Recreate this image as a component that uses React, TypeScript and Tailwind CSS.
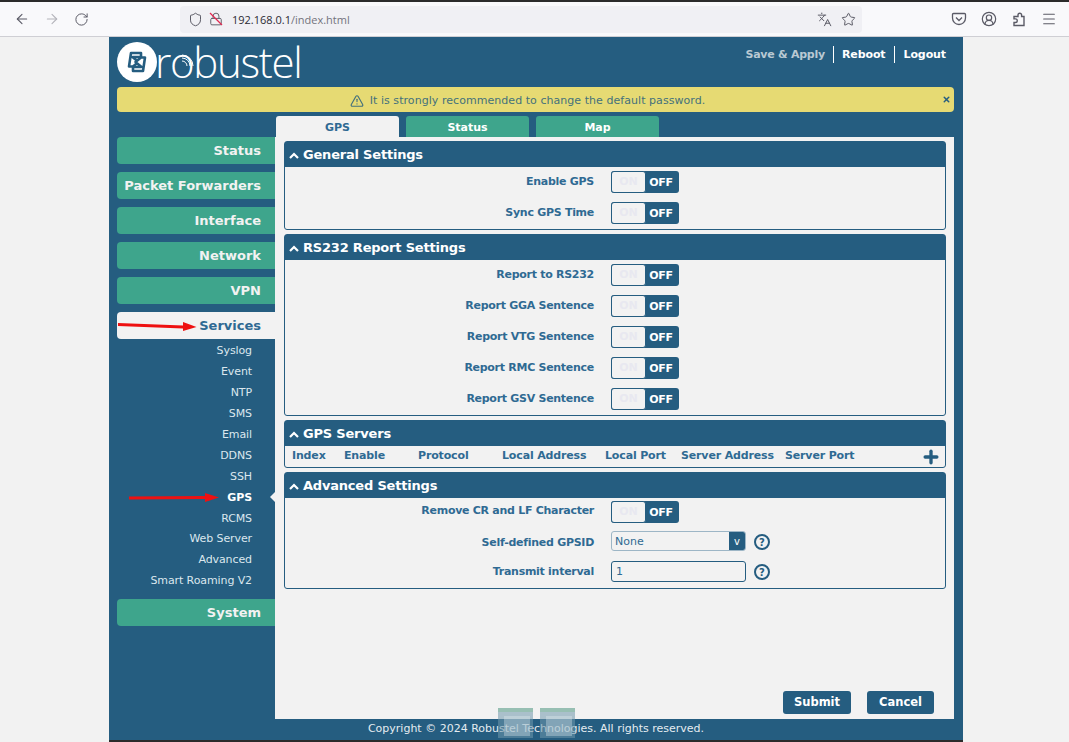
import React from "react";
import { ArrowLeft, ArrowRight, RotateCw, Shield, Lock, Languages, Star, Menu, CircleUserRound, TriangleAlert, Plus, X } from "lucide-react";

const font = "font-['DejaVu_Sans',sans-serif]";

function Toggle() {
  return (
    <div className="flex h-[22px] w-[68px] rounded-[3px] bg-[#255d80]">
      <div className="flex w-[35px] items-center justify-center rounded-[3px] border border-[#255d80] bg-[#f2f2f2] pt-[1px] text-[11px] font-bold text-[#e8e8f0]">ON</div>
      <div className="flex flex-1 items-center justify-center pr-[3px] pt-[2px] text-[11px] font-bold tracking-[-0.3px] text-white">OFF</div>
    </div>
  );
}

function Row({ label, children, compact }: { label: string; children: React.ReactNode; compact?: boolean }) {
  return (
    <div className={`flex items-start ${compact ? "h-[30px]" : "h-[31px]"}`}>
      <div className={`w-[309px] text-right text-[11px] font-bold leading-[16px] tracking-[-0.28px] text-[#2f6a93] ${compact ? "pt-[2px]" : "pt-[3px]"}`}>{label}</div>
      <div className="ml-[17px]">{children}</div>
    </div>
  );
}

function Section({ title, children, bodyClass }: { title: string; children: React.ReactNode; bodyClass: string }) {
  return (
    <section className="rounded-[3px] border border-[#255d80]">
      <div className="flex h-[25px] items-center gap-[4px] bg-[#255d80] pl-[4px] pt-[1px] text-[13px] font-bold tracking-[-0.2px] text-white">
        <svg width="10" height="7" viewBox="0 0 10 7" fill="none" stroke="currentColor" strokeWidth="2.200"><path d="M1 6 5 2l4 4" /></svg>
        <span>{title}</span>
      </div>
      <div className={bodyClass}>{children}</div>
    </section>
  );
}

function Help() {
  return <span className="flex h-[16px] w-[16px] items-center justify-center rounded-full border-2 border-[#255d80] text-[10px] font-bold text-[#255d80]">?</span>;
}

const NavItem = ({ label }: { label: string }) => (
  <div className="flex h-[27px] items-center justify-end rounded-l-[4px] bg-[#3ea58c] pr-[14px] pt-[1px] text-[13px] font-bold text-[#f2f2f2]">{label}</div>
);

const subs = ["Syslog", "Event", "NTP", "SMS", "Email", "DDNS", "SSH", "GPS", "RCMS", "Web Server", "Advanced", "Smart Roaming V2"];

function Sidebar() {
  return (
    <aside className="w-[166px] shrink-0 pl-[8px]">
      <div className="flex flex-col gap-[8px]">
        {["Status", "Packet Forwarders", "Interface", "Network", "VPN"].map((n) => <NavItem key={n} label={n} />)}
        <div className="relative flex h-[27px] items-center justify-end rounded-l-[4px] bg-[#f2f2f2] pr-[14px] pt-[1px] text-[13px] font-bold text-[#2f6a93]">
          Services
          <svg className="absolute left-[1px] top-[8px]" width="80" height="13" viewBox="0 0 80 13">
            <path d="M0 3 L65 5.500 L65 2 L78.500 7 L65 11 L65 8.500 L0 6 Z" fill="#ee1111" />
          </svg>
        </div>
      </div>
      <ul className="mb-[7.400px] mt-[1px] flex flex-col pr-[23px] text-right text-[11px] tracking-[-0.1px] text-[#dbe7ee]">
        {subs.map((s) => (
          <li key={s} className={`relative h-[20.950px] leading-[21px] ${s === "GPS" ? "font-bold text-white" : ""}`}>
            {s}
            {s === "GPS" && (
              <>
                <svg className="absolute left-[12px] top-[5px]" width="90" height="12" viewBox="0 0 90 12">
                  <path d="M0 4.500 L76 4 L76 1 L90 5.500 L76 10 L76 7 L0 7.500 Z" fill="#ee1111" />
                </svg>
                <span className="absolute right-[-23px] top-[5px] h-0 w-0 border-y-[5px] border-r-[5px] border-y-transparent border-r-[#f2f2f2]" />
              </>
            )}
          </li>
        ))}
      </ul>
      <NavItem label="System" />
    </aside>
  );
}

function BrowserBar() {
  return (
    <div className="flex h-[37px] items-center border-b border-t-2 border-b-[#cfcfd4] border-t-[#2b2b2b] bg-[#f9f9fb] text-[#5b5b66]">
      <div className="flex w-[180px] items-center gap-[14px] pl-[14px]">
        <ArrowLeft size={16} strokeWidth={1.600} />
        <ArrowRight size={16} strokeWidth={1.600} className="text-[#b4b4ba]" />
        <RotateCw size={15} strokeWidth={1.600} />
      </div>
      <div className="flex h-[27px] w-[682px] items-center rounded-[4px] bg-[#f0f0f4] pl-[8px] pr-[6px] font-['Open_Sans',sans-serif] text-[11px]">
        <Shield size={15} strokeWidth={1.600} />
        <span className="relative ml-[6px] inline-flex">
          <Lock size={14} strokeWidth={1.600} />
          <svg className="absolute left-0 top-0" width="14" height="14"><path d="M1 1 L13 13" stroke="#e22850" strokeWidth="1.300" /></svg>
        </span>
        <span className="ml-[9px] pt-[2px] text-[#2b2b33]">192.168.0.1</span>
        <span className="pt-[2px] text-[#73737c]">/index.html</span>
        <Languages size={15} strokeWidth={1.600} className="ml-auto" />
        <Star size={15} strokeWidth={1.600} className="ml-[9px]" />
      </div>
      <div className="ml-auto flex items-center gap-[14px] pr-[12px]">
        <svg width="16" height="16" viewBox="0 0 16 16" fill="none" stroke="currentColor" strokeWidth="1.300"><path d="M2.500 2.500h11a1 1 0 0 1 1 1V7a6.500 6.500 0 0 1-13 0V3.500a1 1 0 0 1 1-1Z" /><path d="M5 6.500 8 9.500l3-3" /></svg>
        <CircleUserRound size={16} strokeWidth={1.800} />
        <svg width="16" height="16" viewBox="0 0 16 16" fill="none" stroke="currentColor" strokeWidth="1.400"><path d="M3 5.500H7V4a1.800 1.800 0 0 1 3.600 0V5.500H13V14.500H3V11.500H4.500a1.800 1.800 0 0 0 0-3.600H3Z" /></svg>
        <Menu size={16} strokeWidth={1.600} />
      </div>
    </div>
  );
}

function Logo() {
  return (
    <div className="flex items-center">
      <svg width="40" height="40" viewBox="0 0 40 40">
        <circle cx="20" cy="20" r="20" fill="#fff" />
        <path d="M24 11H14L12 24.500H16L21.500 20 15.500 15H24Z" fill="#fff" stroke="#255d80" strokeWidth="2.600" strokeLinejoin="round" />
        <path d="M16 29H26L28 15.500H24L18.500 20 24.500 25H16Z" fill="#fff" stroke="#255d80" strokeWidth="2.600" strokeLinejoin="round" />
      </svg>
      <span className="relative ml-[-2px] font-['Open_Sans',sans-serif] text-[42px] font-light leading-[40px] tracking-[-1.300px] text-white">
        robustel
        <svg className="absolute left-[26px] top-[11px]" width="14" height="14" viewBox="0 0 14 14" fill="none" stroke="#fff" strokeWidth="1"><path d="M1 2a11 11 0 0 1 11 11M1 5a8 8 0 0 1 8 8M1 8a5 5 0 0 1 5 5" /></svg>
      </span>
    </div>
  );
}

function Header() {
  return (
    <header className="flex h-[50px] items-start justify-between pl-[8px] pr-[17px] pt-[5px]">
      <Logo />
      <div className="mt-[4px] flex items-center text-[11px] font-bold tracking-[-0.1px] text-white">
        <span className="pr-[8px] pt-[1px] tracking-[-0.25px] text-[#b9c9d3]">Save &amp; Apply</span>
        <span className="border-l border-white px-[8px] leading-[17px]">Reboot</span>
        <span className="border-l border-white pl-[9px] leading-[17px]">Logout</span>
      </div>
    </header>
  );
}

function Tabs() {
  const base = "flex h-[21px] w-[123px] items-center justify-center rounded-t-[3px] pt-[4px] text-[11px] font-bold";
  return (
    <div className="ml-[167px] mt-[4px] flex gap-[7px]">
      <div className={`${base} bg-[#f2f2f2] text-[#2f6a93]`}>GPS</div>
      <div className={`${base} bg-[#3ea58c] text-white`}>Status</div>
      <div className={`${base} bg-[#3ea58c] text-white`}>Map</div>
    </div>
  );
}

function Content() {
  const cols = ["Index", "Enable", "Protocol", "Local Address", "Local Port", "Server Address", "Server Port"];
  return (
    <main className="flex h-[582px] w-[679px] flex-col bg-[#f2f2f2] pb-[5px] pl-[9px] pr-[8px] pt-[4px]">
      <div className="flex flex-col gap-[4px]">
        <Section title="General Settings" bodyClass="h-[62px] pt-[4px]">
          <Row label="Enable GPS"><Toggle /></Row>
          <Row label="Sync GPS Time"><Toggle /></Row>
        </Section>
        <Section title="RS232 Report Settings" bodyClass="h-[155px] pt-[4px]">
          {["Report to RS232", "Report GGA Sentence", "Report VTG Sentence", "Report RMC Sentence", "Report GSV Sentence"].map((l) => (
            <Row key={l} label={l}><Toggle /></Row>
          ))}
        </Section>
        <Section title="GPS Servers" bodyClass="grid h-[21px] grid-cols-[52px_74px_84px_103px_76px_104px_1fr_auto] items-center pl-[7px] pr-[4px] text-[11px] font-bold tracking-[-0.15px] text-[#2f6a93]">
          {cols.map((c) => <span key={c}>{c}</span>)}
          <Plus size={20} strokeWidth={4} className="text-[#255d80]" />
        </Section>
        <Section title="Advanced Settings" bodyClass="h-[90px] pt-[3px]">
          <Row compact label="Remove CR and LF Character"><Toggle /></Row>
          <div className="flex h-[30px] items-start">
            <div className="w-[309px] pt-[4px] text-right text-[11px] font-bold leading-[16px] tracking-[-0.28px] text-[#2f6a93]">Self-defined GPSID</div>
            <div className="ml-[17px] flex h-[20px] w-[135px] rounded-[3px] border border-[#9db6c6] text-[11px] text-[#2f6a93]">
              <span className="flex-1 pl-[3px] leading-[20px]">None</span>
              <span className="flex w-[16px] items-center justify-center rounded-r-[2px] bg-[#255d80] text-[10px] text-white">v</span>
            </div>
            <span className="ml-[8px] mt-[3px]"><Help /></span>
          </div>
          <div className="flex items-start">
            <div className="w-[309px] pt-[3px] text-right text-[11px] font-bold leading-[16px] tracking-[-0.28px] text-[#2f6a93]">Transmit interval</div>
            <div className="ml-[17px] h-[21px] w-[135px] rounded-[3px] border border-[#255d80] pl-[4px] text-[11px] leading-[19px] text-[#2f6a93]">1</div>
            <span className="ml-[8px] mt-[3px]"><Help /></span>
          </div>
        </Section>
      </div>
      <div className="mt-auto flex justify-end gap-[16px] pr-[12px]">
        <button className="h-[23px] w-[68px] rounded-[3px] bg-[#255d80] text-[11.500px] font-bold text-white">Submit</button>
        <button className="h-[23px] w-[67px] rounded-[3px] bg-[#255d80] text-[11.500px] font-bold text-white">Cancel</button>
      </div>
    </main>
  );
}

function Thumbs() {
  return (
    <div className="absolute left-[389px] top-[-11px] flex gap-[7px]">
      {[0, 1].map((i) => (
        <div key={i} className="h-[30px] w-[35px] bg-[#6f97ac]/55">
          <div className="h-[4px] bg-[#8fbfa8]/70" />
          <div className="ml-[6px] mt-[4px] h-[20px] w-[26px] bg-[#e6edf0]/35" />
        </div>
      ))}
    </div>
  );
}

export default function App() {
  return (
    <div className={`h-[742px] w-[1069px] overflow-hidden bg-[#f2f2f2] ${font}`}>
      <BrowserBar />
      <div className="ml-[109px] h-[705px] w-[854px] bg-[#255d80]">
        <Header />
        <div className="ml-[8px] mr-[9px] flex h-[25px] items-center justify-center rounded-[4px] bg-[#e6da73] pt-[3px] text-[11px] text-[#44717c]">
          <div className="relative flex w-full items-center justify-center gap-[6px] pr-[16px]">
            <TriangleAlert size={14} />
            <span className="tracking-[0.05px]">It is strongly recommended to change the default password.</span>
            <X size={9} strokeWidth={4} className="absolute right-[3px] top-[2px] text-[#255d80]" />
          </div>
        </div>
        <Tabs />
        <div className="flex">
          <Sidebar />
          <Content />
        </div>
        <div className="relative h-[23px] border-b-2 border-[#2b2b2b] text-center text-[11px] leading-[19px] text-[#e4ecf1]">
          Copyright © 2024 Robustel Technologies. All rights reserved.
          <Thumbs />
        </div>
      </div>
    </div>
  );
}
